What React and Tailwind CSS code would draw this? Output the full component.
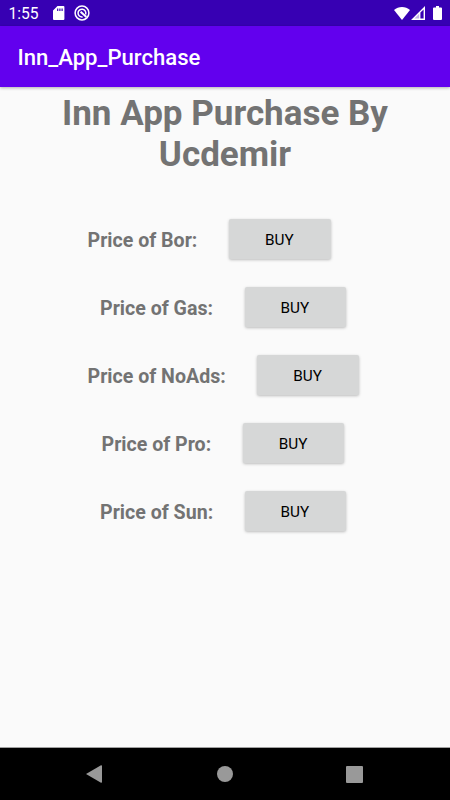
import React from "react";

const products = [
  { name: "Bor", row: "pl-[87px]", label: "w-[138px]" },
  { name: "Gas", row: "pl-[99.5px]", label: "w-[141px]" },
  { name: "NoAds", row: "pl-[87px]", label: "w-[166.3px]" },
  { name: "Pro", row: "pl-[101px]", label: "w-[137.8px]" },
  { name: "Sun", row: "pl-[99.5px]", label: "w-[141px]" },
];

const StatusBar = () => (
  <div className="h-[26px] shrink-0 bg-[#3700b3] text-white flex items-center pl-[8.5px] pr-[8px]">
    <span className="w-[44px] text-[15.6px] leading-[26px] pt-[2px]">1:55</span>
    <svg className="w-[12px] h-[14px]" viewBox="0 0 12 14" fill="currentColor">
      <path
        fillRule="evenodd"
        d="M4.5 0H10.4Q11.4 0 11.4 1V13Q11.4 14 10.4 14H1Q0 14 0 13V4.5ZM4.1 2.4V5H5.3V2.4ZM6.3 2.4V5H7.5V2.4ZM8.5 2.4V5H9.7V2.4Z"
      />
    </svg>
    <svg className="w-[16px] h-[16px] ml-[9.5px]" viewBox="0 0 16 16" fill="none" stroke="currentColor">
      <circle cx="8" cy="8" r="6.9" strokeWidth="1.5" />
      <path d="M11.6 9.4A3.9 3.9 0 1 0 8.6 11.9" strokeWidth="1.5" />
      <path d="M6.6 6.8L12.4 12" strokeWidth="2" />
    </svg>
    <div className="flex items-center ml-auto">
      <svg className="w-[16px] h-[13px]" viewBox="0 0 16 13" fill="currentColor">
        <path d="M8 13L0 3.1C4.4-.9 11.6-.9 16 3.1Z" />
      </svg>
      <svg className="w-[14px] h-[14px] ml-px" viewBox="0 0 14 14">
        <path fill="currentColor" fillRule="evenodd" d="M14 0V14H0ZM12.6 3.4L9.4 6.6V12.6H12.6Z" />
        <path fill="#3700b3" fillOpacity="0.3" d="M8.2 7.8V12.6H3.4Z" />
      </svg>
      <svg className="w-[9px] h-[14px] ml-[8px]" viewBox="0 0 9 14" fill="currentColor">
        <path d="M3 0H6V1.4H8Q9 1.4 9 2.4V13Q9 14 8 14H1Q0 14 0 13V2.4Q0 1.4 1 1.4H3Z" />
      </svg>
    </div>
  </div>
);

const NavigationBar = () => (
  <div className="h-[53px] shrink-0 bg-black border-t border-[#a0a0a0] flex items-center justify-between pl-[86px] pr-[87px]">
    <svg className="w-[16px] h-[18px]" viewBox="0 0 16 18" fill="#999999">
      <path d="M0 9L15 .2Q16 0 16 1V17Q16 18 15 17.8Z" />
    </svg>
    <svg className="w-[16px] h-[16px] ml-[2px]" viewBox="0 0 16 16" fill="#999999">
      <circle cx="8" cy="8" r="8" />
    </svg>
    <div className="w-[17px] h-[17px] rounded-[1px] bg-[#999999]" />
  </div>
);

const App = () => {
  return (
    <div className="w-[450px] h-[800px] flex flex-col overflow-hidden bg-[#fafafa] font-['Roboto',sans-serif]">
      <StatusBar />

      {/* App bar */}
      <header className="h-[61px] shrink-0 bg-[#6200ee] flex items-center pl-[17.5px] pt-[3px] shadow-[0_1px_3px_rgba(0,0,0,0.3)]">
        <span className="text-white text-[22.1px] font-medium">Inn_App_Purchase</span>
      </header>

      <main className="flex-1">
        <h1 className="pt-[6px] h-[118px] text-center text-[35px] leading-[41px] font-bold text-[#737373]">
          Inn App Purchase By
          <br />
          Ucdemir
        </h1>

        {/* Products */}
        <div>
          {products.map((product) => (
            <div key={product.name} className={`h-[68px] flex items-center ${product.row}`}>
              <span className={`pl-[0.5px] pt-[3px] text-[19.6px] font-bold text-[#737373] whitespace-nowrap ${product.label}`}>
                Price of {product.name}:
              </span>
              <button className="ml-[4px] w-[101.7px] h-[40px] rounded-[2px] bg-[#d6d7d7] text-black text-[15.3px] pr-[1px] pt-[2px] shadow-[0_1px_3px_rgba(0,0,0,0.25)]">
                BUY
              </button>
            </div>
          ))}
        </div>
      </main>

      <NavigationBar />
    </div>
  );
};

export default App;
